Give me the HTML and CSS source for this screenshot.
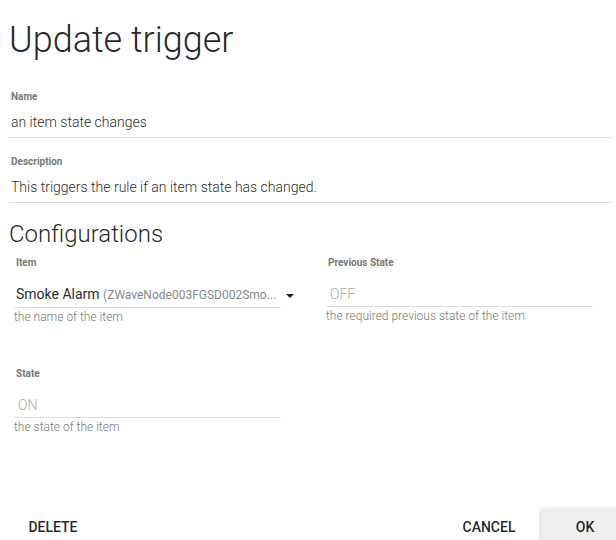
FILE: index.html
```html
<!DOCTYPE html>
<html lang="en">
<head>
  <meta charset="UTF-8" />
  <title>Update trigger</title>
  <link rel="stylesheet" href="styles.css">
</head>
<body>
  <div class="dialog">
    <div class="dialog-content">
      <h2 class="title">Update trigger</h2>

      <div class="field">
        <label>Name</label>
        <div class="input">an item state changes</div>
      </div>

      <div class="field">
        <label>Description</label>
        <div class="input">This triggers the rule if an item state has changed.</div>
      </div>

      <h3 class="section">Configurations</h3>

      <div class="config-grid">
        <div class="param">
          <label>Item</label>
          <div class="input select">
            <span class="select-value">Smoke Alarm <small>(ZWaveNode003FGSD002Smo...</small></span>
            <span class="caret"></span>
          </div>
          <div class="hint">the name of the item</div>
        </div>

        <div class="param">
          <label>Previous State</label>
          <div class="input placeholder">OFF</div>
          <div class="hint">the required previous state of the item</div>
        </div>

        <div class="param">
          <label>State</label>
          <div class="input placeholder">ON</div>
          <div class="hint">the state of the item</div>
        </div>
      </div>
    </div>

    <div class="dialog-actions">
      <button class="btn">Delete</button>
      <div class="right-actions">
        <button class="btn">Cancel</button>
        <button class="btn raised">OK</button>
      </div>
    </div>
  </div>
</body>
</html>
```

FILE: styles.css
```css
body {
  margin: 0;
  font-family: Roboto, "Noto Sans", sans-serif;
  color: rgba(0, 0, 0, 0.87);
  background: #fff;
  overflow: hidden;
  height: 540px;
}

.dialog {
  width: 629px;
  height: 540px;
  display: flex;
  flex-direction: column;
}

.dialog-content {
  padding: 0 4px 0 9px;
}

.title {
  margin: 19px 0 0;
  font-size: 36px;
  font-weight: 300;
  line-height: 42px;
  width: 603px;
}

.field {
  width: 603px;
  margin-top: 29px;
}

.field + .field {
  margin-top: 17px;
}

.field label,
.param label {
  display: block;
  font-size: 10px;
  font-weight: 700;
  color: #777;
  line-height: 14px;
  padding-left: 2px;
}

.input {
  font-size: 14px;
  font-weight: 300;
  line-height: 18px;
  padding: 9px 2px 6px;
  border-bottom: 1px solid #ddd;
}

.section {
  margin: 17px 0 0;
  font-size: 24px;
  font-weight: 300;
  line-height: 28px;
}

.config-grid {
  display: grid;
  grid-template-columns: 267px 267px;
  column-gap: 45px;
  row-gap: 42px;
  padding: 8px 0 0 5px;
}

.param .input {
  padding: 8px 4px 3px;
  margin-top: 7px;
}

.param .select {
  display: flex;
  align-items: center;
  font-weight: 400;
  padding-left: 2px;
}

.select-value {
  flex: 1;
  white-space: nowrap;
  overflow: hidden;
}

.select small {
  font-size: 12px;
  color: #888;
}

.caret {
  width: 0;
  height: 0;
  border-left: 4px solid transparent;
  border-right: 4px solid transparent;
  border-top: 4px solid #222;
  margin: 3px -17px 0 5px;
}

.placeholder {
  color: #aaa;
}

.hint {
  font-size: 12px;
  font-weight: 300;
  color: #777;
  line-height: 16px;
  padding-top: 1px;
}

.dialog-actions {
  margin-top: auto;
  display: flex;
  justify-content: space-between;
  align-items: center;
  padding: 0 0 0 9px;
  margin-bottom: -5px;
}

.right-actions {
  display: flex;
  gap: 8px;
}

.btn {
  min-width: 88px;
  height: 36px;
  padding: 0 6px;
  border: none;
  border-radius: 2px;
  background: transparent;
  font-family: Roboto, sans-serif;
  font-size: 14px;
  font-weight: 500;
  text-transform: uppercase;
  color: rgba(0, 0, 0, 0.87);
  cursor: pointer;
}

.raised {
  background: #eee;
  box-shadow: 0 1px 5px rgba(0, 0, 0, 0.2), 0 2px 2px rgba(0, 0, 0, 0.14);
}
```
